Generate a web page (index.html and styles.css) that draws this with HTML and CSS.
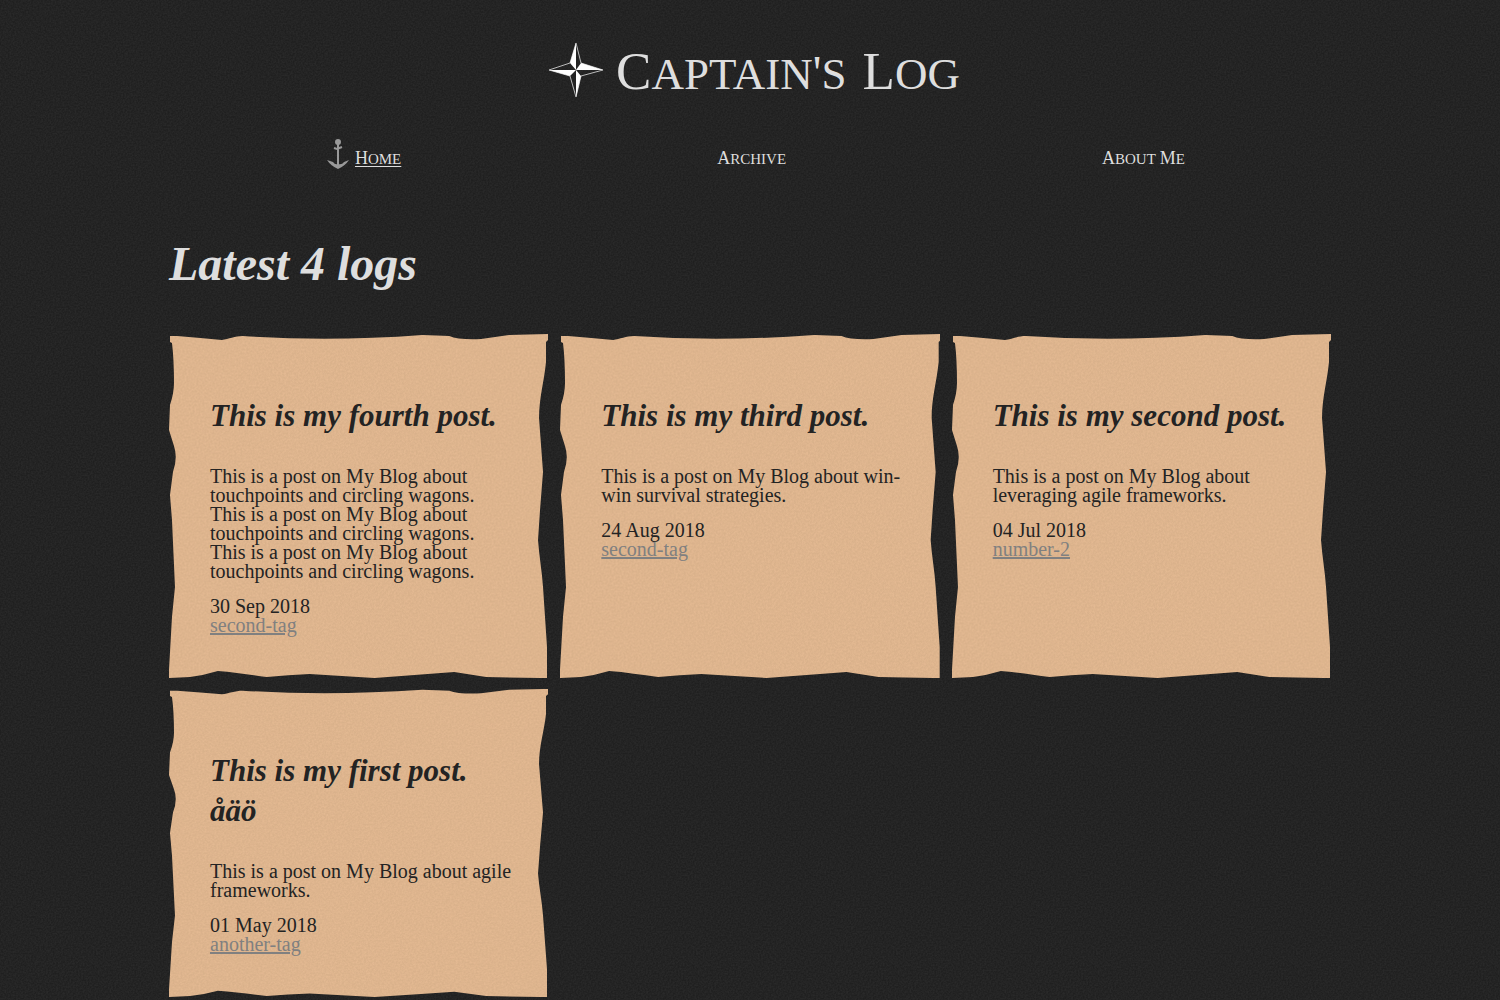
FILE: index.html
```html
<!DOCTYPE html>
<html lang="en">
<head>
<meta charset="utf-8">
<meta name="viewport" content="width=device-width, initial-scale=1">
<title>Captain's Log</title>
<link rel="stylesheet" href="styles.css">
</head>
<body>
<div class="page">
  <header>
    <h1 class="brand">
      <svg class="star" viewBox="0 0 56 56" aria-hidden="true">
        <path class="star-line" d="M28 1 33 21 55 28 33 34 28 55 22 34 1 28 22 21Z"/>
        <path class="star-fill" d="M28 1V28L22 21ZM1 28H28L22 34ZM28 55V28L33 34ZM55 28H28L33 21Z"/>
      </svg>
      <span class="brand-name"><span class="caps">Captain<span class="mark">'</span>s</span> <span class="caps">Log</span></span>
    </h1>
    <nav class="menu">
      <a class="menu-link current" href="#">
        <svg class="anchor" viewBox="0 0 22 32" aria-hidden="true">
          <circle class="ring" cx="11" cy="4" r="2"/>
          <path d="M7 10 10 11 15 9M11 6V27"/>
          <path class="fluke" d="M0 22 6 24Q8 27 11 26 15 27 17 24L22 22Q18 28 11 31 4 28 0 22Z"/>
        </svg>
        <span class="caps underlined">Home</span>
      </a>
      <a class="menu-link" href="#"><span class="caps">Archive</span></a>
      <a class="menu-link" href="#"><span class="caps">About</span> <span class="caps">Me</span></a>
    </nav>
  </header>
  <main>
    <h2 class="heading">Latest 4 logs</h2>
    <div class="logs">
      <article class="log">
        <h3 class="title">This is my fourth post.</h3>
        <p class="summary">This is a post on My Blog about touchpoints and circling wagons. This is a post on My Blog about touchpoints and circling wagons. This is a post on My Blog about touchpoints and circling wagons.</p>
        <time class="date" datetime="2018-09-30">30 Sep 2018</time>
        <a class="tag" href="#">second-tag</a>
      </article>
      <article class="log">
        <h3 class="title">This is my third post.</h3>
        <p class="summary">This is a post on My Blog about win-win survival strategies.</p>
        <time class="date" datetime="2018-08-24">24 Aug 2018</time>
        <a class="tag" href="#">second-tag</a>
      </article>
      <article class="log">
        <h3 class="title">This is my second post.</h3>
        <p class="summary">This is a post on My Blog about leveraging agile frameworks.</p>
        <time class="date" datetime="2018-07-04">04 Jul 2018</time>
        <a class="tag" href="#">number-2</a>
      </article>
      <article class="log">
        <h3 class="title">This is my first post. åäö</h3>
        <p class="summary">This is a post on My Blog about agile frameworks.</p>
        <time class="date" datetime="2018-05-01">01 May 2018</time>
        <a class="tag" href="#">another-tag</a>
      </article>
    </div>
  </main>
</div>
</body>
</html>
```
FILE: styles.css
```css
* { box-sizing: border-box; }

body {
  margin: 0;
  color: #dedede;
  font: 20px/19px "Liberation Serif", serif;
  background: #292929 url("data:image/svg+xml,%3Csvg xmlns='http://www.w3.org/2000/svg' width='200' height='200'%3E%3Cfilter id='n' x='0' y='0' width='1' height='1'%3E%3CfeTurbulence type='fractalNoise' baseFrequency='.6' numOctaves='2' stitchTiles='stitch'/%3E%3CfeColorMatrix values='0 0 0 0 0 0 0 0 0 0 0 0 0 0 0 2 0 0 0 -.5'/%3E%3C/filter%3E%3Crect width='200' height='200' filter='url(%23n)' opacity='.25'/%3E%3C/svg%3E");
}

.page {
  max-width: 1162px;
  margin: 0 auto;
  padding: 40px 0 16px;
}

h1, h2, h3, p { margin: 0; font-weight: inherit; }

/* Capitals with slightly smaller capitals after the first letter */
.caps {
  display: inline-block;
  font-variant: small-caps;
}

.brand {
  display: flex;
  justify-content: center;
  align-items: center;
  gap: 12px;
  margin-left: 8px;
  height: 60px;
}
.brand-name { font-size: 64px; line-height: 60px; }
.brand-name .caps::first-letter { font-size: 53px; }
.mark { font-size: 48px; }
.star { width: 56px; height: 56px; }
.star-line { fill: none; stroke: #bbb; stroke-width: 1; }
.star-fill { fill: #fff; }

.menu {
  display: flex;
  justify-content: space-around;
  align-items: center;
  height: 40px;
  margin: 37px -12px 0 0;
}
.menu-link {
  display: flex;
  align-items: center;
  gap: 4px;
  color: inherit;
  font-size: 21px;
  line-height: 20px;
  text-decoration: none;
}
.menu-link .caps::first-letter { font-size: 18px; }
.underlined { text-decoration: underline 1px; text-underline-offset: 2px; }
.anchor {
  width: 22px;
  height: 32px;
  margin: -6px 2px 0 0;
  fill: none;
  stroke: #999;
  stroke-width: 2;
}
.anchor .ring { fill: #999; }
.anchor .fluke { fill: #999; stroke: none; }

.heading {
  margin: 62px 0 44px;
  font: italic bold 48px/50px "Liberation Serif", serif;
}

.logs {
  display: grid;
  grid-template-columns: repeat(3, 1fr);
  gap: 10px 12px;
}

/* Sheet of paper with torn edges, stretched to the size of the card */
.log {
  display: flex;
  flex-direction: column;
  align-items: flex-start;
  padding: 63px 35px 43px 41px;
  color: #232323;
  background: url("data:image/svg+xml,%3Csvg xmlns='http://www.w3.org/2000/svg' viewBox='0 0 380 345' preserveAspectRatio='none'%3E%3Cdefs%3E%3CclipPath id='c'%3E%3Cpath id='p' d='M1 3H8Q32 5 53 7C60 6 66 3 74 3Q161 9 254 2L281 3Q290 7 313 6L341 2 380 1V7L378 9V29C376 49 371 65 371 85L375 139 372 177 370 207C371 222 374 238 375 254L379 314V345H373L318 344 286 339Q246 342 206 345L141 341Q119 342 98 344C82 342 65 339 49 338Q36 342 21 344L0 345V337L3 284 6 254 3 187 1 162 4 139Q9 125 5 113L0 97 1 72Q5 60 5 50 5 26 3 10L1 9Z'/%3E%3C/clipPath%3E%3Cfilter id='n' x='0' y='0' width='1' height='1'%3E%3CfeTurbulence type='fractalNoise' baseFrequency='.5' numOctaves='2'/%3E%3CfeColorMatrix values='0 0 0 0 .3 0 0 0 0 .2 0 0 0 0 .1 2 0 0 0 -.5'/%3E%3C/filter%3E%3C/defs%3E%3Cg clip-path='url(%23c)'%3E%3Crect width='380' height='345' fill='%23e3b992'/%3E%3Crect width='380' height='345' filter='url(%23n)' opacity='.12'/%3E%3C/g%3E%3C/svg%3E") 0 0 / 100% 100% no-repeat;
}
.title {
  margin-bottom: 31px;
  font: italic bold 31px/40px "Liberation Serif", serif;
}
.summary { margin-bottom: 16px; }
.tag { color: #808080; }
```
